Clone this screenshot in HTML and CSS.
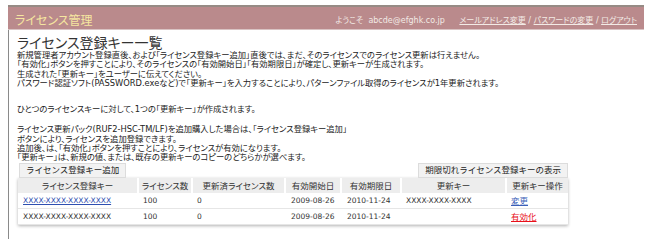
FILE: index.html
```html
<!DOCTYPE html>
<html lang="ja">
<head>
    <meta charset="UTF-8">
    <title>ライセンス登録キー一覧 - ライセンス管理</title>
    <link rel="stylesheet" href="styles.css">
</head>
<body>
    <div class="page">
        <div class="header">
            <span class="site-title">ライセンス管理</span>
            <div class="user-nav">
                <span class="welcome">ようこそ&nbsp; abcde@efghk.co.jp</span>
                <a href="#">メールアドレス変更</a> /
                <a href="#">パスワードの変更</a> /
                <a href="#">ログアウト</a>
            </div>
        </div>
        <div class="content">
            <h1>ライセンス登録キー一覧</h1>
            <p class="note intro">
                新規管理者アカウント登録直後、および「ライセンス登録キー追加」直後では、まだ、そのライセンスでのライセンス更新は行えません。<br>
                「有効化」ボタンを押すことにより、そのライセンスの「有効開始日」「有効期限日」が確定し、更新キーが生成されます。<br>
                生成された「更新キー」をユーザーに伝えてください。<br>
                パスワード認証ソフト(PASSWORD.exeなど)で「更新キー」を入力することにより、パターンファイル取得のライセンスが1年更新されます。
            </p>
            <p class="note">ひとつのライセンスキーに対して、1つの「更新キー」が作成されます。</p>
            <p class="note last">
                ライセンス更新パック(RUF2-HSC-TM/LF)を追加購入した場合は、「ライセンス登録キー追加」<br>
                ボタンにより、ライセンスを追加登録できます。<br>
                追加後、は、「有効化」ボタンを押すことにより、ライセンスが有効になります。<br>
                「更新キー」は、新規の値、または、既存の更新キーのコピーのどちらかが選べます。
            </p>
            <div class="toolbar">
                <button type="button" class="btn">ライセンス登録キー追加</button>
                <button type="button" class="btn">期限切れライセンス登録キーの表示</button>
            </div>
            <table class="keys">
                <colgroup>
                    <col class="c-key"><col class="c-count"><col class="c-done">
                    <col class="c-start"><col class="c-end"><col class="c-renew"><col class="c-op">
                </colgroup>
                <thead>
                    <tr>
                        <th>ライセンス登録キー</th>
                        <th>ライセンス数</th>
                        <th>更新済ライセンス数</th>
                        <th>有効開始日</th>
                        <th>有効期限日</th>
                        <th>更新キー</th>
                        <th>更新キー操作</th>
                    </tr>
                </thead>
                <tbody>
                    <tr>
                        <td><a href="#" class="key-link">XXXX-XXXX-XXXX-XXXX</a></td>
                        <td>100</td>
                        <td>0</td>
                        <td>2009-08-26</td>
                        <td>2010-11-24</td>
                        <td>XXXX-XXXX-XXXX</td>
                        <td><a href="#" class="op-link">変更</a></td>
                    </tr>
                    <tr>
                        <td>XXXX-XXXX-XXXX-XXXX</td>
                        <td>100</td>
                        <td>0</td>
                        <td>2009-08-26</td>
                        <td>2010-11-24</td>
                        <td></td>
                        <td><a href="#" class="op-link activate">有効化</a></td>
                    </tr>
                </tbody>
            </table>
        </div>
    </div>
</body>
</html>
```

FILE: styles.css
```css
html, body {
    margin: 0;
    background-color: #ffffff;
    color: #333333;
    font-family: 'DejaVu Sans', 'Noto Sans CJK JP', sans-serif;
    font-feature-settings: "palt";
}
.page {
    width: 636px;
    padding: 5px 0 0 8px;
}
.header {
    display: flex;
    justify-content: space-between;
    align-items: center;
    height: 22px;
    padding: 0 7px;
    background-color: #ba8a8c;
    border-top: 2px solid #968b85;
    border-bottom: 1px solid #d9c3c3;
}
.site-title {
    color: #f6e6a0;
    font-size: 12px;
    margin-top: 3px;
}
.user-nav {
    color: #f3ebe6;
    font-size: 8px;
    margin-top: 3px;
}
.welcome {
    margin-right: 12px;
}
.user-nav a {
    color: #f3ebe6;
}
.content {
    border-left: 1px solid #8a8a8a;
    padding: 5px 0 14px 8px;
}
h1 {
    margin: 0;
    font-size: 14px;
    font-weight: normal;
    line-height: 16px;
    color: #333333;
}
.note {
    margin: 0 0 11px;
    font-size: 8.3px;
    line-height: 9.3px;
    color: #222222;
}
.note.intro {
    margin-bottom: 17px;
}
.note.last {
    margin-bottom: 0;
}
.toolbar {
    display: flex;
    justify-content: space-between;
    align-items: flex-start;
    width: 549px;
    margin: 0 0 0 2px;
}
.btn {
    font-family: inherit;
    font-size: 8.5px;
    color: #222222;
    background-color: #f2f2f2;
    border: 1px solid #dcdcdc;
    padding: 0 6px;
    height: 15px;
    line-height: 13px;
}
.keys {
    width: 550px;
    table-layout: fixed;
    border-collapse: collapse;
    margin-left: 1px;
    box-shadow: 0 1px 3px rgba(0, 0, 0, 0.3);
}
.c-key { width: 120px; }
.c-count { width: 54px; }
.c-done { width: 93px; }
.c-start { width: 56px; }
.c-end { width: 60px; }
.c-renew { width: 105px; }
.c-op { width: 62px; }
.keys th {
    height: 15px;
    padding: 0;
    font-size: 8.5px;
    font-weight: normal;
    color: #333333;
    background-color: #ededed;
    border-right: 2px solid #ffffff;
    text-align: center;
}
.keys th:last-child {
    border-right: none;
}
.keys td {
    height: 15px;
    padding: 0 0 0 5px;
    font-size: 7.5px;
    color: #333333;
    border-bottom: 1px solid #e6e6e6;
    white-space: nowrap;
}
.keys td:nth-child(4),
.keys td:nth-child(5) {
    padding-left: 6px;
}
.key-link {
    color: #2f4fb0;
}
.op-link {
    color: #3b5fb8;
    font-size: 8.5px;
}
.op-link.activate {
    color: #e8101a;
}
```
